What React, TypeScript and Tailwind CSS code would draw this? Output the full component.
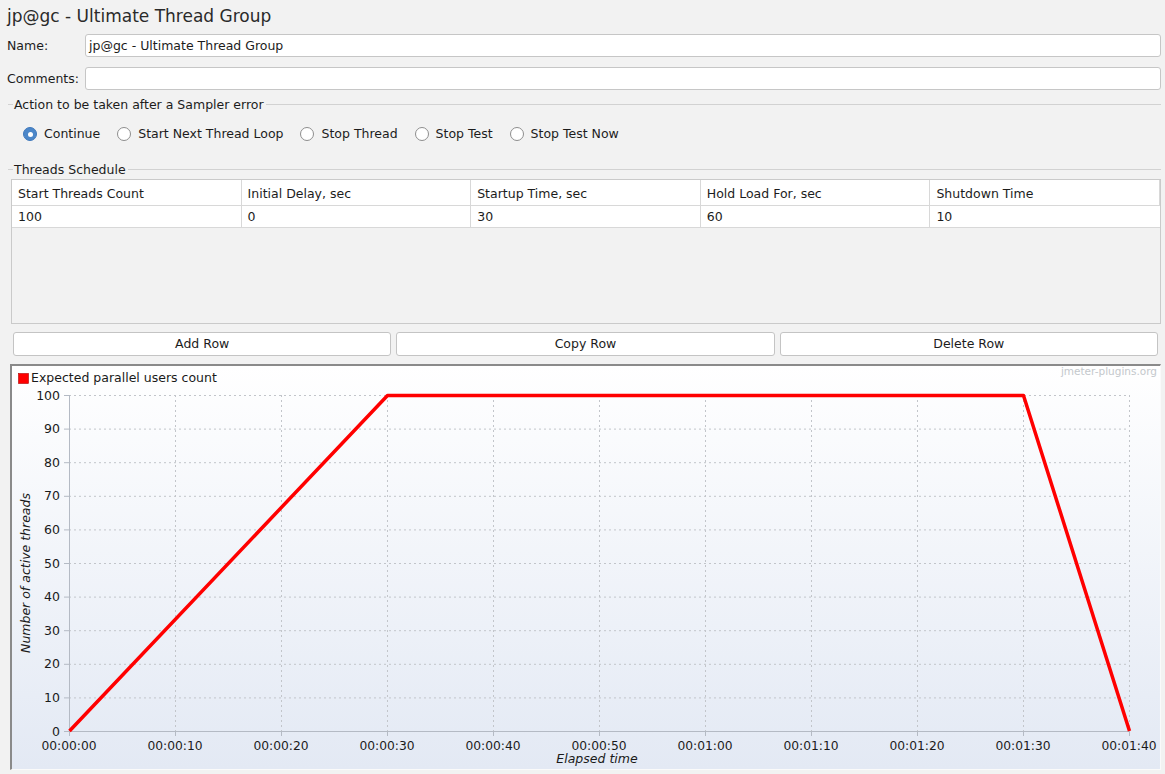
import React from 'react';

const columns = ['Start Threads Count', 'Initial Delay, sec', 'Startup Time, sec', 'Hold Load For, sec', 'Shutdown Time'];
const values = ['100', '0', '30', '60', '10'];
const radios = ['Continue', 'Start Next Thread Loop', 'Stop Thread', 'Stop Test', 'Stop Test Now'];

// plot geometry (svg coords, relative to the inner chart panel)
const X0 = 57;
const X1 = 1117;
const YT = 29;
const YB = 365;
const xLabels = ['00:00:00', '00:00:10', '00:00:20', '00:00:30', '00:00:40', '00:00:50', '00:01:00', '00:01:10', '00:01:20', '00:01:30', '00:01:40'];

function Chart() {
  const stepX = (X1 - X0) / 10;
  const stepY = (YB - YT) / 10;
  return (
    <svg width="1148" height="403" className="block font-['DejaVu_Sans',sans-serif]">
      {/* legend */}
      <rect x="6.5" y="7.5" width="10" height="10" fill="#ff0000" stroke="#b00000" strokeWidth="0.6" />
      <text x="19" y="16" fontSize="12.5" fill="#1a1a1a">Expected parallel users count</text>
      <text x="1145" y="9" fontSize="10.5" fill="#c4c8cc" textAnchor="end">jmeter-plugins.org</text>

      {/* grid */}
      {Array.from({ length: 10 }).map((_, i) => (
        <line key={'v' + i} x1={X0 + stepX * (i + 1) + 0.5} x2={X0 + stepX * (i + 1) + 0.5} y1={YT} y2={YB} stroke="#c2c5ca" strokeDasharray="2 3" />
      ))}
      {Array.from({ length: 10 }).map((_, i) => (
        <line key={'h' + i} x1={X0} x2={X1} y1={YB - stepY * (i + 1) + 0.5} y2={YB - stepY * (i + 1) + 0.5} stroke="#c2c5ca" strokeDasharray="2 3" />
      ))}

      {/* axes */}
      <line x1={X0 + 0.5} x2={X0 + 0.5} y1={YT} y2={YB + 5} stroke="#b4bac4" />
      <line x1={X0 - 5} x2={X1} y1={YB + 0.5} y2={YB + 0.5} stroke="#b4bac4" />
      {Array.from({ length: 11 }).map((_, i) => (
        <g key={'yt' + i}>
          <line x1={X0 - 5} x2={X0} y1={YB - stepY * i + 0.5} y2={YB - stepY * i + 0.5} stroke="#b4bac4" />
          <text x={48} y={YB - stepY * i + 4.5} fontSize="12.5" fill="#1a1a1a" textAnchor="end">{i * 10}</text>
        </g>
      ))}
      {xLabels.map((l, i) => (
        <g key={l}>
          <line x1={X0 + stepX * i + 0.5} x2={X0 + stepX * i + 0.5} y1={YB} y2={YB + 5} stroke="#b4bac4" />
          <text x={X0 + stepX * i} y={383.5} fontSize="12.3" fill="#1a1a1a" textAnchor="middle">{l}</text>
        </g>
      ))}
      <text x="585" y="396.5" fontSize="12.5" fontStyle="italic" fill="#1a1a1a" textAnchor="middle">Elapsed time</text>
      <text x="0" y="0" fontSize="12.5" fontStyle="italic" fill="#1a1a1a" textAnchor="middle" transform="translate(17.5 207) rotate(-90)">Number of active threads</text>

      {/* series */}
      <polyline
        points={`${X0 + 0.5},${YB} ${X0 + stepX * 3 + 0.5},${YT + 0.5} ${X0 + stepX * 9 + 0.5},${YT + 0.5} ${X1 + 0.5},${YB}`}
        fill="none"
        stroke="#ff0000"
        strokeWidth="3.5"
        strokeLinejoin="round"
      />
    </svg>
  );
}

function Radio({ label, checked }: { label: string; checked?: boolean }) {
  return (
    <div className="flex items-center gap-[7px]">
      {checked ? (
        <span className="w-[14px] h-[14px] rounded-full bg-[#4c87c9] border border-[#3f78bb] flex items-center justify-center">
          <span className="w-[5px] h-[5px] rounded-full bg-white" />
        </span>
      ) : (
        <span className="w-[14px] h-[14px] rounded-full bg-white border border-[#8e8e8e]" />
      )}
      <span className="pt-px">{label}</span>
    </div>
  );
}

function SectionTitle({ children }: { children: React.ReactNode }) {
  return (
    <div className="flex items-center h-[16px] pl-[8px] pr-[4px]">
      <div className="w-[5px] h-px bg-[#d2d2d2]" />
      <span className="px-[1px] pt-[2px]">{children}</span>
      <div className="flex-1 h-px bg-[#d2d2d2] ml-[1px]" />
    </div>
  );
}

export default function App() {
  return (
    <div className="w-[1165px] h-[774px] bg-[#f2f2f2] text-[#1c1c1c] text-[12.5px] font-['DejaVu_Sans',sans-serif] overflow-hidden">
      <div className="h-[32px] flex items-center pl-[7px] pt-[2px] text-[17px] text-[#2a2a2a]">jp@gc - Ultimate Thread Group</div>

      <div className="mt-[2px] flex items-center pr-[4px]">
        <span className="w-[85px] pl-[7px] pt-[2px]">Name:</span>
        <div className="flex-1 h-[23px] bg-white border border-[#c6c6c6] rounded-[3px] flex items-center pl-[3px] pt-[2px]">jp@gc - Ultimate Thread Group</div>
      </div>
      <div className="mt-[10px] flex items-center pr-[4px]">
        <span className="w-[85px] pl-[7px] pt-[2px]">Comments:</span>
        <div className="flex-1 h-[23px] bg-white border border-[#c6c6c6] rounded-[3px]" />
      </div>

      <div className="mt-[6px]">
        <SectionTitle>Action to be taken after a Sampler error</SectionTitle>
      </div>
      <div className="h-[18px] mt-[13px] flex items-center pl-[23px] gap-[17px]">
        {radios.map((r, i) => (
          <Radio key={r} label={r} checked={i === 0} />
        ))}
      </div>

      <div className="mt-[18px]">
        <SectionTitle>Threads Schedule</SectionTitle>
      </div>
      <div className="mt-[2px] ml-[11px] w-[1150px] h-[145px] border border-[#cacaca] bg-[#f2f2f2]">
        <div className="grid grid-cols-5 bg-white">
          {columns.map((c) => (
            <div key={c} className="h-[26px] flex items-center pl-[6px] pt-[4px] border-r border-b border-[#d8d8d8] last:border-r-0">{c}</div>
          ))}
          {values.map((v, i) => (
            <div key={i} className="h-[22px] flex items-center pl-[6px] pt-[2px] border-r border-b border-[#d8d8d8] last:border-r-0">{v}</div>
          ))}
        </div>
      </div>

      <div className="mt-[8px] ml-[13px] w-[1145px] grid grid-cols-3 gap-[5px]">
        {['Add Row', 'Copy Row', 'Delete Row'].map((b) => (
          <div key={b} className="h-[24px] bg-white border border-[#c4c4c4] rounded-[3px] flex items-center justify-center">{b}</div>
        ))}
      </div>

      <div className="mt-[8px] ml-[10px] w-[1151px] h-[406px] border-t-2 border-l-2 border-[#8a8a8a] border-r border-b border-r-[#fafafa] border-b-[#fafafa] bg-gradient-to-b from-[#ffffff] to-[#e3e9f4]">
        <Chart />
      </div>
    </div>
  );
}
